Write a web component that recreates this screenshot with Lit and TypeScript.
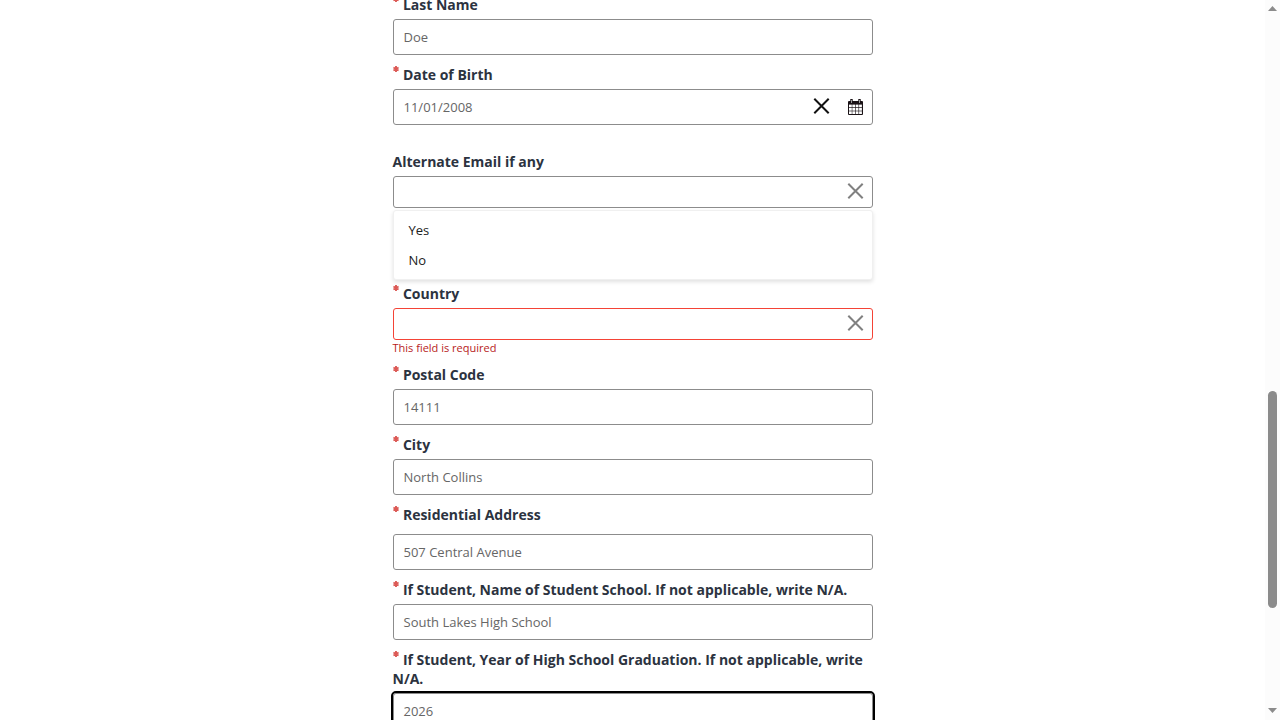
import { LitElement, html, css, svg, nothing } from "lit";
import { customElement, property } from "lit/decorators.js";

const asterisk = html`<svg class="star" viewBox="0 0 6 6" width="6" height="6">
  <path d="M3 0V6M.4 1.5L5.6 4.5M.4 4.5L5.6 1.5" stroke="#dc5a56" stroke-width="1.9" fill="none"/>
</svg>`;

const cross = html`<svg class="cross" viewBox="0 0 16 16" width="16" height="16">
  <path d="M.3 .8L14.7 15.2M14.7 .8L.3 15.2" stroke="currentColor" stroke-width="2" fill="none"/>
</svg>`;

const calendar = html`<svg viewBox="0 0 15 16" width="15" height="16">
  <path d="M1 2H14Q15 2 15 3V15Q15 16 14 16H1Q0 16 0 15V3Q0 2 1 2Z" fill="#1a1216"/>
  <path d="M2.3 0H4.7V4H2.3ZM10.3 0H12.7V4H10.3Z" fill="#1a1216"/>
  <path d="M3 1H4V4H3ZM11 1H12V4H11Z" fill="#999"/>
  ${[5.6, 9, 12.3].map((y) => [1, 4.3, 7.7, 11.1].map((x) => svg`<rect x=${x} y=${y} width="2.8" height="2.7" fill="#fff"/>`))}
</svg>`;

@customElement("form-field")
class FormField extends LitElement {
  @property() label = "";
  @property() value = "";
  @property() kind = "text";
  @property() error = "";
  @property({ type: Boolean }) required = false;
  @property({ type: Boolean }) focused = false;

  static styles = css`
    :host { display: block; }
    .label { position: relative; font-size: 14px; font-weight: 700; line-height: 19px; color: #2c333f; margin-bottom: var(--label-gap, 5px); }
    .label.required { text-indent: 10.4px; }
    .star { position: absolute; left: 0.5px; top: 1px; }
    .box { box-sizing: border-box; height: 36px; border: 1px solid #8c8c8c; border-radius: 3px; display: flex; align-items: center; justify-content: space-between; padding: 0 9px 0 10px; font-size: 13px; color: #666; background: #fff; }
    .box.select { height: 32px; color: #808080; }
    .box.invalid { border-color: #f44336; }
    .box.focused { outline: 2px solid #000; outline-offset: 0; }
    .icons { display: flex; align-items: center; gap: 18px; color: #111; }
    .select .icons { color: #808080; }
    .icons svg { display: block; overflow: visible; }
    .cross { margin-top: -2px; }
    .select .cross { margin-right: -1px; }
    .error { font-size: 11px; line-height: 15px; color: #b71c1c; height: 15px; }
  `;

  render() {
    const icons = this.kind === "date"
      ? html`<span class="icons">${cross}${calendar}</span>`
      : this.kind === "select" ? html`<span class="icons">${cross}</span>` : nothing;
    return html`
      <div class="label ${this.required ? "required" : ""}">${this.required ? asterisk : nothing}${this.label}</div>
      <div class="box ${this.kind} ${this.error ? "invalid" : ""} ${this.focused ? "focused" : ""}"><span>${this.value}</span>${icons}</div>
      ${this.error ? html`<div class="error">${this.error}</div>` : nothing}`;
  }
}

@customElement("app-root")
class AppRoot extends LitElement {
  static styles = css`
    :host { display: flex; height: 720px; overflow: hidden; background: #fff; font-family: "Open Sans", "Noto Sans", sans-serif; }
    .page { flex: 1; height: 720px; overflow: hidden; }
    .form { display: flex; flex-direction: column; gap: 10px; width: 480px; margin: -5px auto 0; }
    .email { margin-top: 17px; position: relative; }
    .country { margin-top: 66px; }
    .address { --label-gap: 10px; }
    .menu { position: absolute; left: 0; right: 0; top: 58px; box-sizing: border-box; height: 70px; padding: 4px 0; background: #fff; border: 1px solid #f0f0f0; border-radius: 3px; box-shadow: 0 2px 4px rgba(0,0,0,.12); font-size: 13px; line-height: 30px; color: #212121; }
    .option { padding-left: 15px; }
    .scrollbar { width: 15px; height: 720px; background: #fcfcfc; display: flex; flex-direction: column; align-items: center; }
    .scrollbar svg { display: block; fill: #8b8b8b; }
    .track { flex: 1; padding-top: 374px; box-sizing: border-box; }
    .thumb { width: 9px; height: 217px; border-radius: 5px; background: #8b8b8b; }
  `;

  render() {
    return html`
      <main class="page">
        <div class="form">
          <form-field required label="Last Name" value="Doe"></form-field>
          <form-field required label="Date of Birth" value="11/01/2008" kind="date"></form-field>
          <div class="email">
            <form-field label="Alternate Email if any" kind="select"></form-field>
            <div class="menu"><div class="option">Yes</div><div class="option">No</div></div>
          </div>
          <form-field class="country" required label="Country" kind="select" error="This field is required"></form-field>
          <form-field required label="Postal Code" value="14111"></form-field>
          <form-field required label="City" value="North Collins"></form-field>
          <form-field class="address" required label="Residential Address" value="507 Central Avenue"></form-field>
          <form-field required label="If Student, Name of Student School. If not applicable, write N/A." value="South Lakes High School"></form-field>
          <form-field required focused label="If Student, Year of High School Graduation. If not applicable, write N/A." value="2026"></form-field>
        </div>
      </main>
      <div class="scrollbar">
        <svg width="15" height="17" viewBox="0 0 15 17"><path d="M3 11L7.5 6L12 11Z"/></svg>
        <div class="track"><div class="thumb"></div></div>
        <svg width="15" height="17" viewBox="0 0 15 17"><path d="M3 5L7.5 10L12 5Z"/></svg>
      </div>`;
  }
}
